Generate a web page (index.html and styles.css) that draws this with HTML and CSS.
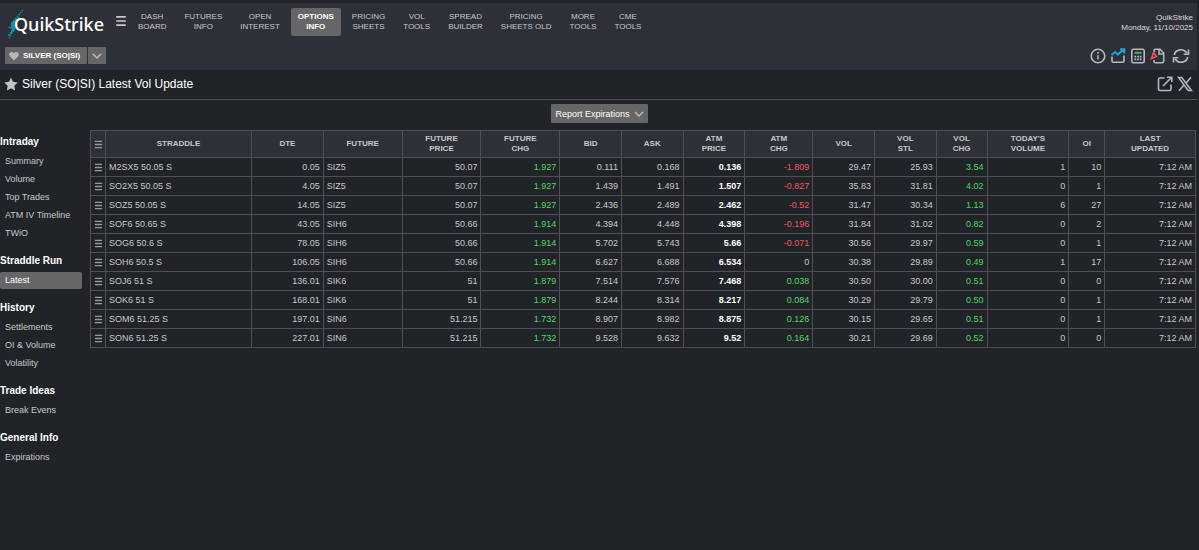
FILE: index.html
```
<!DOCTYPE html>
<html lang="en">
<head>
	<meta charset="UTF-8">
	<title>QuikStrike - Silver (SO|SI) Latest Vol Update</title>
	<link rel="stylesheet" href="styles.css">
</head>
<body>
<svg class="defs" aria-hidden="true">
	<symbol id="bars" viewBox="0 0 10 10"><path d="M1 1.5h8M1 5h8M1 8.5h8" fill="none" stroke="currentColor" stroke-width="1.4"/></symbol>
	<symbol id="down" viewBox="0 0 10 10"><path d="M1 3l4 4 4-4" fill="none" stroke="currentColor" stroke-width="1.5"/></symbol>
</svg>
<header class="header">
	<div class="topbar">
		<a class="logo" href="#">
			<svg class="bolt" viewBox="0 0 18 30" aria-hidden="true">
				<path d="M9 9L4 14v4H0l5 2-2 6 5-5 1-4z" fill="#1b8d97"/>
				<path d="M16 1L5 14M12 8L5 16M9 17L2 29M7 19l-6 8" stroke="#1f8c98" stroke-width="1.6" stroke-dasharray="1.600 1"/>
			</svg>
			<span>QuikStrike</span>
		</a>
		<button class="menu" aria-label="Menu"><svg viewBox="0 0 10 10"><use href="#bars"/></svg></button>
		<nav class="nav">
			<a href="#">DASH<br>BOARD</a>
			<a href="#">FUTURES<br>INFO</a>
			<a href="#">OPEN<br>INTEREST</a>
			<a href="#" class="active">OPTIONS<br>INFO</a>
			<a href="#">PRICING<br>SHEETS</a>
			<a href="#">VOL<br>TOOLS</a>
			<a href="#">SPREAD<br>BUILDER</a>
			<a href="#">PRICING<br>SHEETS OLD</a>
			<a href="#">MORE<br>TOOLS</a>
			<a href="#">CME<br>TOOLS</a>
		</nav>
		<div class="user">QuikStrike<br>Monday, 11/10/2025</div>
	</div>
	<div class="toolbar">
		<div class="product">
			<button class="btn name">
				<svg class="heart" viewBox="0 0 10 10" aria-hidden="true"><path d="M5 9.5L1 5.4C-.6 3.4.6 1 2.6 1 3.8 1 4.6 1.6 5 2.4 5.4 1.6 6.2 1 7.4 1c2 0 3.2 2.4 1.6 4.4z" fill="#b4b7c0"/></svg>
				SILVER (SO|SI)
			</button>
			<button class="btn arrow" aria-label="Choose product"><svg viewBox="0 0 10 10"><use href="#down"/></svg></button>
		</div>
		<div class="icons">
			<button aria-label="Information"><svg viewBox="0 0 16 16"><circle cx="8" cy="8" r="6.8"/><path d="M8 7.2v4.3"/><path d="M8 4v1.7"/></svg></button>
			<button aria-label="Chart"><svg viewBox="0 0 16 16"><path d="M2 8.5V13q0 1.2 1.2 1.2h9.6q1.2 0 1.2-1.2V7.5"/><path d="M1.5 7l3.6-3 2.7 2.4L13.5 1.8M10 1.3h4.3v4.2" class="blue"/></svg></button>
			<button aria-label="Calculator"><svg viewBox="0 0 16 16"><rect x="1.8" y="1.2" width="12.4" height="13.6" rx="1.6"/><path d="M4.5 4.8h7" class="green"/><path d="M4.5 8.6h7M4.5 11.4h7" stroke-dasharray="1.7 .95"/></svg></button>
			<button aria-label="PDF"><svg viewBox="0 0 16 16"><path d="M4 4V2.7q0-1.500 1.500-1.500h4.600L13.700 5v8.200q0 1.600-1.600 1.600H5.500q-1.500 0-1.500-1.500V12M9 1.500v4.500h4.500"/><path d="M1.500 10.500L3.500 4.500 6.500 8.500z" class="red"/></svg></button>
			<button class="wide" aria-label="Refresh"><svg viewBox="0 0 18 16"><path d="M2.300 7A6.700 6.200 0 0 1 14.800 5M16.500 1.500v4.800h-4.800M15.700 9A6.700 6.200 0 0 1 3.200 11M1.500 14.500V9.700h4.800"/></svg></button>
		</div>
	</div>
</header>

<div class="titlebar">
	<svg class="star" viewBox="0 0 14 14" aria-hidden="true"><path d="M7 .5l2 4.300 4.700.6-3.400 3.300.8 4.700L7 11.200l-4.100 2.200.8-4.700L.3 5.400 5 4.800z" fill="#c4c4c4"/></svg>
	<h1>Silver (SO|SI) Latest Vol Update</h1>
	<div class="icons">
		<button aria-label="Open in new window"><svg viewBox="0 0 16 16"><path d="M7.500 2H3Q1.500 2 1.500 3.500v9.500q0 1.500 1.500 1.500h9.500q1.500 0 1.500-1.500V8.500M6 10l8.500-8.500M10 1.300h4.800V6"/></svg></button>
		<button aria-label="Share on X"><svg viewBox="0 0 16 16"><path d="M1.500 1.500h3.300l9.700 13h-3.300zM14 1.200L9.100 7M6.800 9.300L2 14.800"/></svg></button>
	</div>
</div>

<div class="filter">
	<button class="btn report">Report Expirations <svg viewBox="0 0 10 10" aria-hidden="true"><use href="#down"/></svg></button>
</div>

<div class="main">
	<aside class="side">
		<h2>Intraday</h2>
		<ul>
			<li><a href="#">Summary</a></li>
			<li><a href="#">Volume</a></li>
			<li><a href="#">Top Trades</a></li>
			<li><a href="#">ATM IV Timeline</a></li>
			<li><a href="#">TWiO</a></li>
		</ul>
		<h2>Straddle Run</h2>
		<ul>
			<li><a href="#" class="active">Latest</a></li>
		</ul>
		<h2>History</h2>
		<ul>
			<li><a href="#">Settlements</a></li>
			<li><a href="#">OI &amp; Volume</a></li>
			<li><a href="#">Volatility</a></li>
		</ul>
		<h2>Trade Ideas</h2>
		<ul>
			<li><a href="#">Break Evens</a></li>
		</ul>
		<h2>General Info</h2>
		<ul>
			<li><a href="#">Expirations</a></li>
		</ul>
	</aside>

	<table class="grid">
		<colgroup>
			<col class="w15"><col class="w146"><col class="w72"><col class="w79"><col class="w79"><col class="w79">
			<col class="w62"><col class="w62"><col class="w62"><col class="w68"><col class="w62"><col class="w62">
			<col class="w51"><col class="w82"><col class="w36"><col class="w91">
		</colgroup>
		<thead>
			<tr>
				<th><svg viewBox="0 0 10 10"><use href="#bars"/></svg></th>
				<th>STRADDLE</th>
				<th>DTE</th>
				<th>FUTURE</th>
				<th>FUTURE<br>PRICE</th>
				<th>FUTURE<br>CHG</th>
				<th>BID</th>
				<th>ASK</th>
				<th>ATM<br>PRICE</th>
				<th>ATM<br>CHG</th>
				<th>VOL</th>
				<th>VOL<br>STL</th>
				<th>VOL<br>CHG</th>
				<th>TODAY'S<br>VOLUME</th>
				<th>OI</th>
				<th>LAST<br>UPDATED</th>
			</tr>
		</thead>
		<tbody>
			<tr><td class="m"><svg viewBox="0 0 10 10"><use href="#bars"/></svg></td><td class="l">M2SX5 50.05 S</td><td>0.05</td><td class="l">SIZ5</td><td>50.07</td><td class="up">1.927</td><td>0.111</td><td>0.168</td><td class="b">0.136</td><td class="dn">-1.809</td><td>29.47</td><td>25.93</td><td class="up">3.54</td><td>1</td><td>10</td><td>7:12 AM</td></tr>
			<tr><td class="m"><svg viewBox="0 0 10 10"><use href="#bars"/></svg></td><td class="l">SO2X5 50.05 S</td><td>4.05</td><td class="l">SIZ5</td><td>50.07</td><td class="up">1.927</td><td>1.439</td><td>1.491</td><td class="b">1.507</td><td class="dn">-0.827</td><td>35.83</td><td>31.81</td><td class="up">4.02</td><td>0</td><td>1</td><td>7:12 AM</td></tr>
			<tr><td class="m"><svg viewBox="0 0 10 10"><use href="#bars"/></svg></td><td class="l">SOZ5 50.05 S</td><td>14.05</td><td class="l">SIZ5</td><td>50.07</td><td class="up">1.927</td><td>2.436</td><td>2.489</td><td class="b">2.462</td><td class="dn">-0.52</td><td>31.47</td><td>30.34</td><td class="up">1.13</td><td>6</td><td>27</td><td>7:12 AM</td></tr>
			<tr><td class="m"><svg viewBox="0 0 10 10"><use href="#bars"/></svg></td><td class="l">SOF6 50.65 S</td><td>43.05</td><td class="l">SIH6</td><td>50.66</td><td class="up">1.914</td><td>4.394</td><td>4.448</td><td class="b">4.398</td><td class="dn">-0.196</td><td>31.84</td><td>31.02</td><td class="up">0.82</td><td>0</td><td>2</td><td>7:12 AM</td></tr>
			<tr><td class="m"><svg viewBox="0 0 10 10"><use href="#bars"/></svg></td><td class="l">SOG6 50.6 S</td><td>78.05</td><td class="l">SIH6</td><td>50.66</td><td class="up">1.914</td><td>5.702</td><td>5.743</td><td class="b">5.66</td><td class="dn">-0.071</td><td>30.56</td><td>29.97</td><td class="up">0.59</td><td>0</td><td>1</td><td>7:12 AM</td></tr>
			<tr><td class="m"><svg viewBox="0 0 10 10"><use href="#bars"/></svg></td><td class="l">SOH6 50.5 S</td><td>106.05</td><td class="l">SIH6</td><td>50.66</td><td class="up">1.914</td><td>6.627</td><td>6.688</td><td class="b">6.534</td><td>0</td><td>30.38</td><td>29.89</td><td class="up">0.49</td><td>1</td><td>17</td><td>7:12 AM</td></tr>
			<tr><td class="m"><svg viewBox="0 0 10 10"><use href="#bars"/></svg></td><td class="l">SOJ6 51 S</td><td>136.01</td><td class="l">SIK6</td><td>51</td><td class="up">1.879</td><td>7.514</td><td>7.576</td><td class="b">7.468</td><td class="up">0.038</td><td>30.50</td><td>30.00</td><td class="up">0.51</td><td>0</td><td>0</td><td>7:12 AM</td></tr>
			<tr><td class="m"><svg viewBox="0 0 10 10"><use href="#bars"/></svg></td><td class="l">SOK6 51 S</td><td>168.01</td><td class="l">SIK6</td><td>51</td><td class="up">1.879</td><td>8.244</td><td>8.314</td><td class="b">8.217</td><td class="up">0.084</td><td>30.29</td><td>29.79</td><td class="up">0.50</td><td>0</td><td>1</td><td>7:12 AM</td></tr>
			<tr><td class="m"><svg viewBox="0 0 10 10"><use href="#bars"/></svg></td><td class="l">SOM6 51.25 S</td><td>197.01</td><td class="l">SIN6</td><td>51.215</td><td class="up">1.732</td><td>8.907</td><td>8.982</td><td class="b">8.875</td><td class="up">0.126</td><td>30.15</td><td>29.65</td><td class="up">0.51</td><td>0</td><td>1</td><td>7:12 AM</td></tr>
			<tr><td class="m"><svg viewBox="0 0 10 10"><use href="#bars"/></svg></td><td class="l">SON6 51.25 S</td><td>227.01</td><td class="l">SIN6</td><td>51.215</td><td class="up">1.732</td><td>9.528</td><td>9.632</td><td class="b">9.52</td><td class="up">0.164</td><td>30.21</td><td>29.69</td><td class="up">0.52</td><td>0</td><td>0</td><td>7:12 AM</td></tr>
		</tbody>
	</table>
</div>
</body>
</html>
```
FILE: styles.css
```
*{
	margin: 0;
	padding: 0;
	box-sizing: border-box;
}
body{
	background-color: #202428;
	color: #c8c8c8;
	font-family: "Liberation Sans", Arial, sans-serif;
	font-size: 9px;
}
a{color: inherit; text-decoration: none;}
ul{list-style: none;}
button{border: 0; background: none; color: inherit; font-family: inherit; cursor: pointer;}
svg{display: block;}
.defs{display: none;}

/* header */
.header{
	background-color: #2d3038;
	border-top: 3px solid #202428;
	margin-right: 2px;
	padding-bottom: 6px;
}
.topbar{display: flex; align-items: flex-start; height: 44px; padding: 5px 4px 0 7px;}
.logo{display: flex; align-items: center; height: 32px; color: #fff; font: 500 18px/32px "Noto Sans", "Open Sans", sans-serif;}
.bolt{width: 18px; height: 30px; margin-right: -11px;}
.logo span{position: relative;}
.menu{margin: 7px 4px 0 11px;}
.menu svg{width: 12px; height: 12px;}
.nav{display: flex; flex: 1; gap: 4px;}
.nav a{
	padding: 4px 7px;
	border-radius: 2px;
	font-size: 8px;
	line-height: 10px;
	text-align: center;
	white-space: nowrap;
}
.nav a.active{background-color: #666; color: #fff; font-weight: bold;}
.user{padding-top: 5px; font-size: 8px; line-height: 10px; text-align: right; color: #ddd;}
.toolbar{display: flex; justify-content: space-between; align-items: center; padding: 0 7px 0 5px;}
.product{display: flex; gap: 1px;}
.btn{
	display: flex;
	align-items: center;
	gap: 4px;
	height: 17px;
	padding: 0 4px;
	border-radius: 1px;
	background-color: #666;
	color: #fff;
	font-size: 8px;
	font-weight: bold;
}
.btn.name{padding-right: 7px;}
.btn svg{width: 10px; height: 10px; color: #bbb;}
.icons{display: flex; align-items: center; gap: 4px;}
.icons svg{width: 16px; height: 16px; fill: none; stroke: #b4b7c0; stroke-width: 1.6;}
.icons .wide{margin-left: 2px;}
.icons .wide svg{width: 18px;}
.icons .blue{stroke: #1fa0e0; stroke-width: 2;}
.icons .green{stroke: #4caf50; stroke-width: 2;}
.icons .red{stroke: #f0505a;}

/* title */
.titlebar{display: flex; align-items: center; height: 30px; margin-right: 2px; padding: 0 4px 2px; border-bottom: 1px solid #4e5054;}
.titlebar h1{flex: 1; margin-left: 4px; color: #fff; font-size: 12px; font-weight: normal;}
.star{width: 14px; height: 14px;}
.filter{display: flex; justify-content: center; padding: 4px 0 7px;}
.btn.report{height: 19px; font-size: 9px; font-weight: normal;}

.main{display: flex; align-items: flex-start; padding-right: 3px;}

/* left menu */
.side{flex: 0 0 82px; margin-right: 8px; padding-top: 2px;}
.side h2{margin-bottom: 1px; color: #fff; font-size: 10px; line-height: 20px;}
.side ul{margin-bottom: 9px;}
.side a{display: block; height: 17px; margin-bottom: 1px; padding-left: 5px; border-radius: 2px; line-height: 17px; white-space: nowrap;}
.side a.active{background-color: #666; color: #fff;}

/* vol table */
.grid{flex: 1; width: 100%; table-layout: fixed; border-collapse: collapse;}
.grid th, .grid td{border: 1px solid #4e5054;}
.grid th{height: 27px; background-color: #2d3038; font-size: 8px; line-height: 10px;}
.grid td{height: 19px; padding: 0 3px; text-align: right; white-space: nowrap;}
.grid td.l{text-align: left;}
.grid td.m{padding: 0;}
.grid svg{width: 9px; height: 9px; margin: 0 auto; color: #999;}
.grid .up{color: #4fd865;}
.grid .dn{color: #f25560;}
.grid .b{color: #fff; font-weight: bold;}
.w15{width: 1.36%;}
.w36{width: 3.25%;}
.w51{width: 4.6%;}
.w62{width: 5.58%;}
.w68{width: 6.15%;}
.w72{width: 6.5%;}
.w79{width: 7.13%;}
.w82{width: 7.4%;}
.w91{width: 8.2%;}
.w146{width: 13.2%;}
```
